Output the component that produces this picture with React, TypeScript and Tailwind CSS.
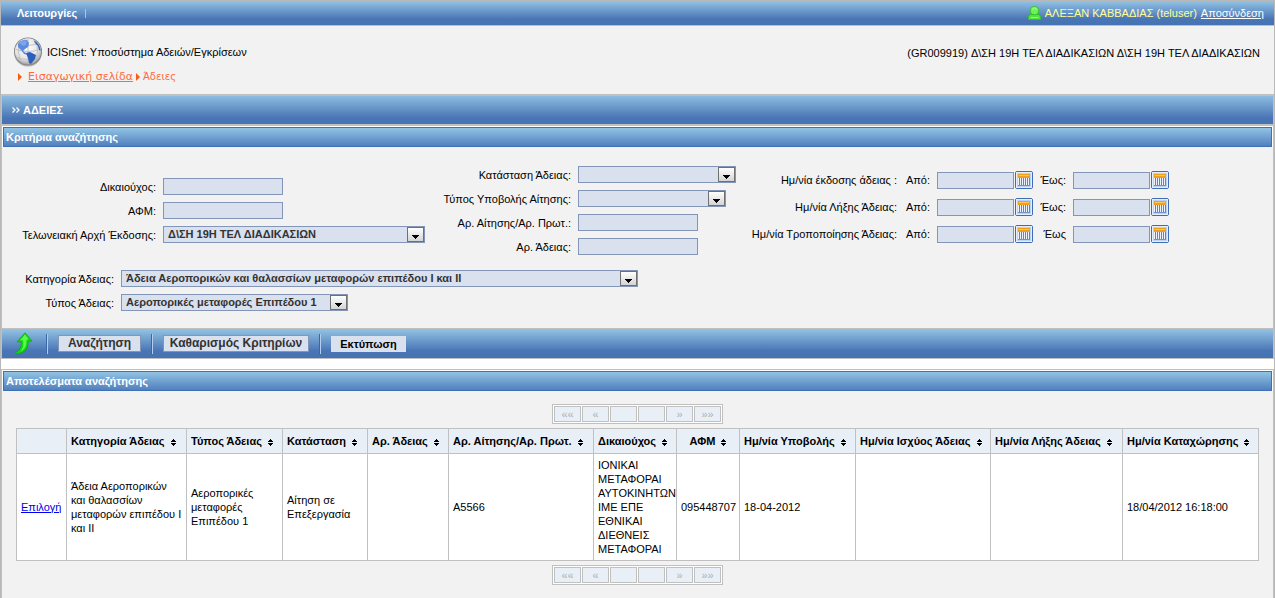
import { useId, type ReactNode } from "react";

const field = "h-[17px] border border-[#8496b8] bg-[#d9e0ee]";
const bar =
  "bg-[linear-gradient(to_bottom,#92c3e4_0%,#4a75b5_75%,#4472b2_100%)]";

function TextField({ label }: { label: string }) {
  const id = useId();
  return (
    <>
      <label htmlFor={id} className="text-right">
        {label}
      </label>
      <input id={id} type="text" className={`${field} w-[120px] px-1`} />
    </>
  );
}

function SelectField({
  label,
  value,
  width,
}: {
  label: string;
  value: string;
  width: string;
}) {
  const id = useId();
  return (
    <>
      <label htmlFor={id} className="text-right">
        {label}
      </label>
      <div className={`relative h-[17px] ${width}`}>
        <select
          id={id}
          className={`${field} block w-full appearance-none pl-1 pr-5 text-[11px] leading-[15px] font-bold text-[#333]`}
        >
          <option>{value}</option>
        </select>
        <span className="pointer-events-none absolute top-px right-px flex h-[15px] w-[17px] items-end justify-center border border-[#707070] bg-linear-to-b from-white to-[#d4d4d4] pb-[2px]">
          <svg width="7" height="4" viewBox="0 0 7 4" shapeRendering="crispEdges">
            <path d="M0 0h7v1H6v1H5v1H4v1H3V3H2V2H1V1H0z" fill="#000" />
          </svg>
        </span>
      </div>
    </>
  );
}

function CalendarIcon() {
  return (
    <svg width="18" height="18" viewBox="0 0 18 18" className="block">
      <rect x="0.5" y="0.5" width="17" height="17" rx="1.5" fill="#bcd2f0" stroke="#3f6db5" />
      <rect x="1.5" y="1.5" width="15" height="15" fill="none" stroke="#e4eefc" />
      <g shapeRendering="crispEdges">
        <rect x="3" y="6" width="12" height="9" fill="#eef3fb" />
        <path d="M4 6h1v9H4zM6 6h1v9H6zM8 6h1v9H8zM10 6h1v9h-1zM12 6h1v9h-1zM14 6h1v9h-1z" fill="#5f86c4" />
        <rect x="3" y="14" width="12" height="1" fill="#6f92cb" />
        <rect x="3" y="3" width="12" height="4" fill="#f0a01c" />
        <rect x="4" y="4" width="10" height="1" fill="#ffc65c" />
      </g>
    </svg>
  );
}

function DateField({ label, title }: { label: string; title: string }) {
  const id = useId();
  return (
    <>
      <label htmlFor={id} className="text-right">
        {label}
      </label>
      <div className="flex items-center gap-px">
        <input id={id} type="text" className={`${field} w-[77px] px-1`} />
        <button type="button" aria-label={title}>
          <CalendarIcon />
        </button>
      </div>
    </>
  );
}

function DateRange({ label, to }: { label: string; to: string }) {
  return (
    <>
      <span className="text-right">{label}</span>
      <DateField label="Από:" title={`${label} Από`} />
      <DateField label={to} title={`${label} Έως`} />
    </>
  );
}

function PanelHeading({ children }: { children: ReactNode }) {
  return (
    <div className="border border-white border-b-0">
      <h2 className="h-5 border border-[#3f70b3] bg-linear-to-b from-[#92c3e4] to-[#5180bd] px-[2px] leading-[18px] font-bold text-white">
        {children}
      </h2>
    </div>
  );
}

function Pager() {
  const cells = ["««", "«", "", "", "»", "»»"];
  return (
    <nav className="flex w-fit gap-px border border-[#c0c0c0] bg-white p-px">
      {cells.map((c, i) => (
        <button
          key={i}
          type="button"
          disabled
          className="h-4 w-[27px] border border-[#c0c0c0] bg-[#e8eff7] text-[11px] leading-[14px] text-[#b0b0b0]"
        >
          {c}
        </button>
      ))}
    </nav>
  );
}

function SortIcon() {
  return (
    <svg width="5" height="7" viewBox="0 0 5 7" className="mb-[-1px] ml-[6px] inline-block align-baseline" shapeRendering="crispEdges">
      <path d="M2 0h1v1h1v1h1v1H0V2h1V1h1zM0 4h5v1H4v1H3v1H2V6H1V5H0z" fill="#000" />
    </svg>
  );
}

function Globe() {
  return (
    <svg width="30" height="30" viewBox="0 0 30 30">
      <defs>
        <radialGradient id="sea" cx="45%" cy="35%" r="65%">
          <stop offset="0" stopColor="#ffffff" />
          <stop offset="0.7" stopColor="#e3e3e3" />
          <stop offset="1" stopColor="#9b9b9b" />
        </radialGradient>
        <clipPath id="disc">
          <circle cx="15" cy="14.5" r="12.6" />
        </clipPath>
      </defs>
      <ellipse cx="15" cy="16.4" rx="13.6" ry="13.2" fill="#bcbcbc" />
      <circle cx="15" cy="14.5" r="14" fill="#7f7f7f" />
      <circle cx="15" cy="14.5" r="13.2" fill="url(#sea)" />
      <g clipPath="url(#disc)">
        <path d="M2 12q13 5 26 0M3 20q12 5 24 0M5 7q10 3 20 0M15 1v27M8 3q-6 12 2 24M22 3q6 12-2 24" fill="none" stroke="#bdbdbd" strokeWidth="0.9" />
        <path d="M5 5l4-3 5 1 2 3-1 4-3 2-2 2 3 2 4 1-2 1-4-1-3-4-3-3z" fill="#5b8be0" />
        <path d="M13 16l4-1 6 3-1 4-4 5-2-1-1-5z" fill="#2a5fc0" />
        <path d="M20 2l5 3 2.500 4 .5 5-2-1-1-4-3-3z" fill="#2f63c2" />
        <path d="M6 6l4-3 4 1-1 4-3 1z" fill="#7ba4ea" />
      </g>
    </svg>
  );
}

function UserIcon() {
  return (
    <svg width="13" height="14" viewBox="0 0 13 14">
      <path d="M0.500 13.500V10.500L2.500 8.500h8l2 2v3z" fill="#52e23c" stroke="#35c42a" />
      <circle cx="6.500" cy="4.600" r="4.100" fill="#6df05a" stroke="#35c42a" />
      <path d="M4.500 4a2 2 0 0 1 4 0M3 11.500h7" fill="none" stroke="#a9fb98" />
    </svg>
  );
}

function BackArrow() {
  return (
    <svg width="19" height="23" viewBox="0 0 19 23">
      <path d="M11 .8l7 8.200-3.800.4c.4 6-2.700 12-12.700 12.600-.8 0-1-1-.4-1.300C6 19 7.500 15 7 9.800L3 10z" fill="#12d812" stroke="#0aa40a" strokeWidth="0.7" />
      <path d="M11 2.500l3.500 4.500-2 1c0 5-1 9-6 11.500C9.500 16 9.800 12 9 8l-3 .5z" fill="#5cf84e" />
    </svg>
  );
}

function Separator() {
  return <span className="h-5 w-[2px] border-l border-r border-l-[#3a66a6] border-r-[#b4cdee]" />;
}

function Caret() {
  return (
    <svg width="4" height="8" viewBox="0 0 4 8">
      <path d="M0 0l4 4-4 4z" fill="#ff5a12" />
    </svg>
  );
}

const columns: { title: string; width: string; center?: boolean }[] = [
  { title: "", width: "w-[50px]" },
  { title: "Κατηγορία Άδειας", width: "w-[120px]" },
  { title: "Τύπος Άδειας", width: "w-[96px]" },
  { title: "Κατάσταση", width: "w-[85px]" },
  { title: "Αρ. Άδειας", width: "w-[81px]" },
  { title: "Αρ. Αίτησης/Αρ. Πρωτ.", width: "w-[145px]" },
  { title: "Δικαιούχος", width: "w-[83px]" },
  { title: "ΑΦΜ", width: "w-[63px]", center: true },
  { title: "Ημ/νία Υποβολής", width: "w-[116px]" },
  { title: "Ημ/νία Ισχύος Άδειας", width: "w-[135px]" },
  { title: "Ημ/νία Λήξης Άδειας", width: "w-[132px]" },
  { title: "Ημ/νία Καταχώρησης", width: "w-[136px]" },
];

const row = [
  "Άδεια Αεροπορικών και θαλασσίων μεταφορών επιπέδου Ι και ΙΙ",
  "Αεροπορικές μεταφορές Επιπέδου 1",
  "Αίτηση σε Επεξεργασία",
  "",
  "Α5566",
  "ΙΟΝΙΚΑΙ ΜΕΤΑΦΟΡΑΙ ΑΥΤΟΚΙΝΗΤΩΝ ΙΜΕ ΕΠΕ ΕΘΝΙΚΑΙ ΔΙΕΘΝΕΙΣ ΜΕΤΑΦΟΡΑΙ",
  "095448707",
  "18-04-2012",
  "",
  "",
  "18/04/2012 16:18:00",
];

export default function App() {
  return (
    <div className="flex min-h-screen flex-col border border-b-0 border-[#b8b8b8] bg-white font-['Liberation_Sans',Arial,sans-serif] text-[11px] leading-[14px] text-black">
      <div className={`flex h-[25px] items-center justify-between border-b border-[#c0c0c0] pr-[10px] pl-4 ${bar}`}>
        <div className="flex items-center gap-[8px]">
          <button type="button" className="font-bold text-white">
            Λειτουργίες
          </button>
          <span className="h-[9px] w-px bg-[#a9c6ea]" />
        </div>
        <div className="flex items-center gap-1 text-[#ffff99]">
          <UserIcon />
          <span>ΑΛΕΞΑΝ ΚΑΒΒΑΔΙΑΣ (teluser)</span>
          <a href="#" className="text-white underline">
            Αποσύνδεση
          </a>
        </div>
      </div>

      <header className="flex h-[68px] justify-between bg-[#f2f2f2] pt-[11px] pr-[14px] pl-3">
        <div>
          <div className="flex items-center gap-1">
            <Globe />
            <h1>ICISnet: Υποσύστημα Αδειών/Εγκρίσεων</h1>
          </div>
          <nav className="mt-[3px] flex items-center pl-[5px] font-['DejaVu_Sans',Verdana,sans-serif] text-[10px] text-[#ff6a3c]">
            <Caret />
            <a href="#" className="mr-[3px] ml-[6px] text-[11px] underline">
              Εισαγωγική σελίδα
            </a>
            <Caret />
            <span className="ml-[3px]">Άδειες</span>
          </nav>
        </div>
        <div className="pt-[9px]">
          (GR009919) Δ\ΣΗ 19Η ΤΕΛ ΔΙΑΔΙΚΑΣΙΩΝ Δ\ΣΗ 19Η ΤΕΛ ΔΙΑΔΙΚΑΣΙΩΝ
        </div>
      </header>

      <div className={`flex h-8 items-center gap-[3px] border-x border-y-2 border-[#c0c0c0] pl-[10px] font-bold text-white ${bar} bg-origin-border`}>
        <svg width="8" height="6" viewBox="0 0 8 6">
          <path d="M.5 .5L3 3 .5 5.500M4.500 .5L7 3 4.500 5.500" fill="none" stroke="#fff" strokeWidth="1.300" />
        </svg>
        <h2>ΑΔΕΙΕΣ</h2>
      </div>

      <section className="border-x border-b border-[#c0c0c0] bg-[#f2f2f2]">
        <PanelHeading>Κριτήρια αναζήτησης</PanelHeading>
        <form className="h-[181px] pt-[19px]">
          <div className="flex items-start">
            <div className="mt-3 grid grid-cols-[154px_262px] items-center gap-x-[7px] gap-y-[7px]">
              <TextField label="Δικαιούχος:" />
              <TextField label="ΑΦΜ:" />
              <SelectField label="Τελωνειακή Αρχή Έκδοσης:" value="Δ\ΣΗ 19Η ΤΕΛ ΔΙΑΔΙΚΑΣΙΩΝ" width="w-[262px]" />
            </div>
            <div className="grid grid-cols-[146px_158px] items-center gap-x-[7px] gap-y-[7px]">
              <SelectField label="Κατάσταση Άδειας:" value="" width="w-[158px]" />
              <SelectField label="Τύπος Υποβολής Αίτησης:" value="" width="w-[148px]" />
              <TextField label="Αρ. Αίτησης/Αρ. Πρωτ.:" />
              <TextField label="Αρ. Άδειας:" />
            </div>
            <div className="mt-[5px] grid grid-cols-[161px_26px_96px_26px_96px] items-center gap-x-[7px] gap-y-[9px]">
              <DateRange label="Ημ/νία έκδοσης άδειας :" to="Έως:" />
              <DateRange label="Ημ/νία Λήξης Άδειας:" to="Έως:" />
              <DateRange label="Ημ/νία Τροποποίησης Άδειας:" to="Έως" />
            </div>
          </div>
          <div className="mt-[15px] grid grid-cols-[112px_517px] items-center gap-x-[7px] gap-y-[7px]">
            <SelectField
              label="Κατηγορία Άδειας:"
              value="Άδεια Αεροπορικών και θαλασσίων μεταφορών επιπέδου Ι και ΙΙ"
              width="w-[517px]"
            />
            <SelectField label="Τύπος Άδειας:" value="Αεροπορικές μεταφορές Επιπέδου 1" width="w-[227px]" />
          </div>
        </form>
      </section>

      <div className={`flex h-[30px] items-center border-x border-b border-[#c0c0c0] pl-3 ${bar}`}>
        <button type="button" aria-label="Επιστροφή" className="mr-[13px]">
          <BackArrow />
        </button>
        <Separator />
        <button type="button" className="mx-[10px] h-[17px] w-[83px] border border-[#8496b8] bg-[#d9e0ee] text-[12px] leading-[15px] font-bold text-[#333]">
          Αναζήτηση
        </button>
        <Separator />
        <button type="button" className="mx-[10px] h-[17px] w-[146px] border border-[#8496b8] bg-[#d9e0ee] text-[12px] leading-[15px] font-bold text-[#333]">
          Καθαρισμός Κριτηρίων
        </button>
        <Separator />
        <button type="button" className="mx-[10px] h-4 w-[75px] bg-[#d9e0ee] leading-4 font-bold">
          Εκτύπωση
        </button>
      </div>

      <section className="mt-[10px] flex-1 border-x border-t border-[#c0c0c0] bg-[#f2f2f2]">
        <PanelHeading>Αποτελέσματα αναζήτησης</PanelHeading>
        <div className="flex flex-col items-center gap-1 px-[14px] pt-[13px] pb-3">
          <Pager />
          <table className="w-full table-fixed border-collapse bg-white">
            <thead>
              <tr className="h-[25px] bg-[#e8eff7]">
                {columns.map((c, i) => (
                  <th
                    key={i}
                    className={`border border-[#c0c0c0] px-1 font-bold whitespace-nowrap ${c.width} ${c.center ? "text-center" : "text-left"}`}
                  >
                    {c.title}
                    {c.title && <SortIcon />}
                  </th>
                ))}
              </tr>
            </thead>
            <tbody>
              <tr>
                <td className="border border-[#c0c0c0] px-1 py-1">
                  <a href="#" className="text-[#0000ee] underline">
                    Επιλογή
                  </a>
                </td>
                {row.map((v, i) => (
                  <td key={i} className="border border-[#c0c0c0] py-1 pr-[3px] pl-1">
                    {v}
                  </td>
                ))}
              </tr>
            </tbody>
          </table>
          <Pager />
        </div>
      </section>
    </div>
  );
}
